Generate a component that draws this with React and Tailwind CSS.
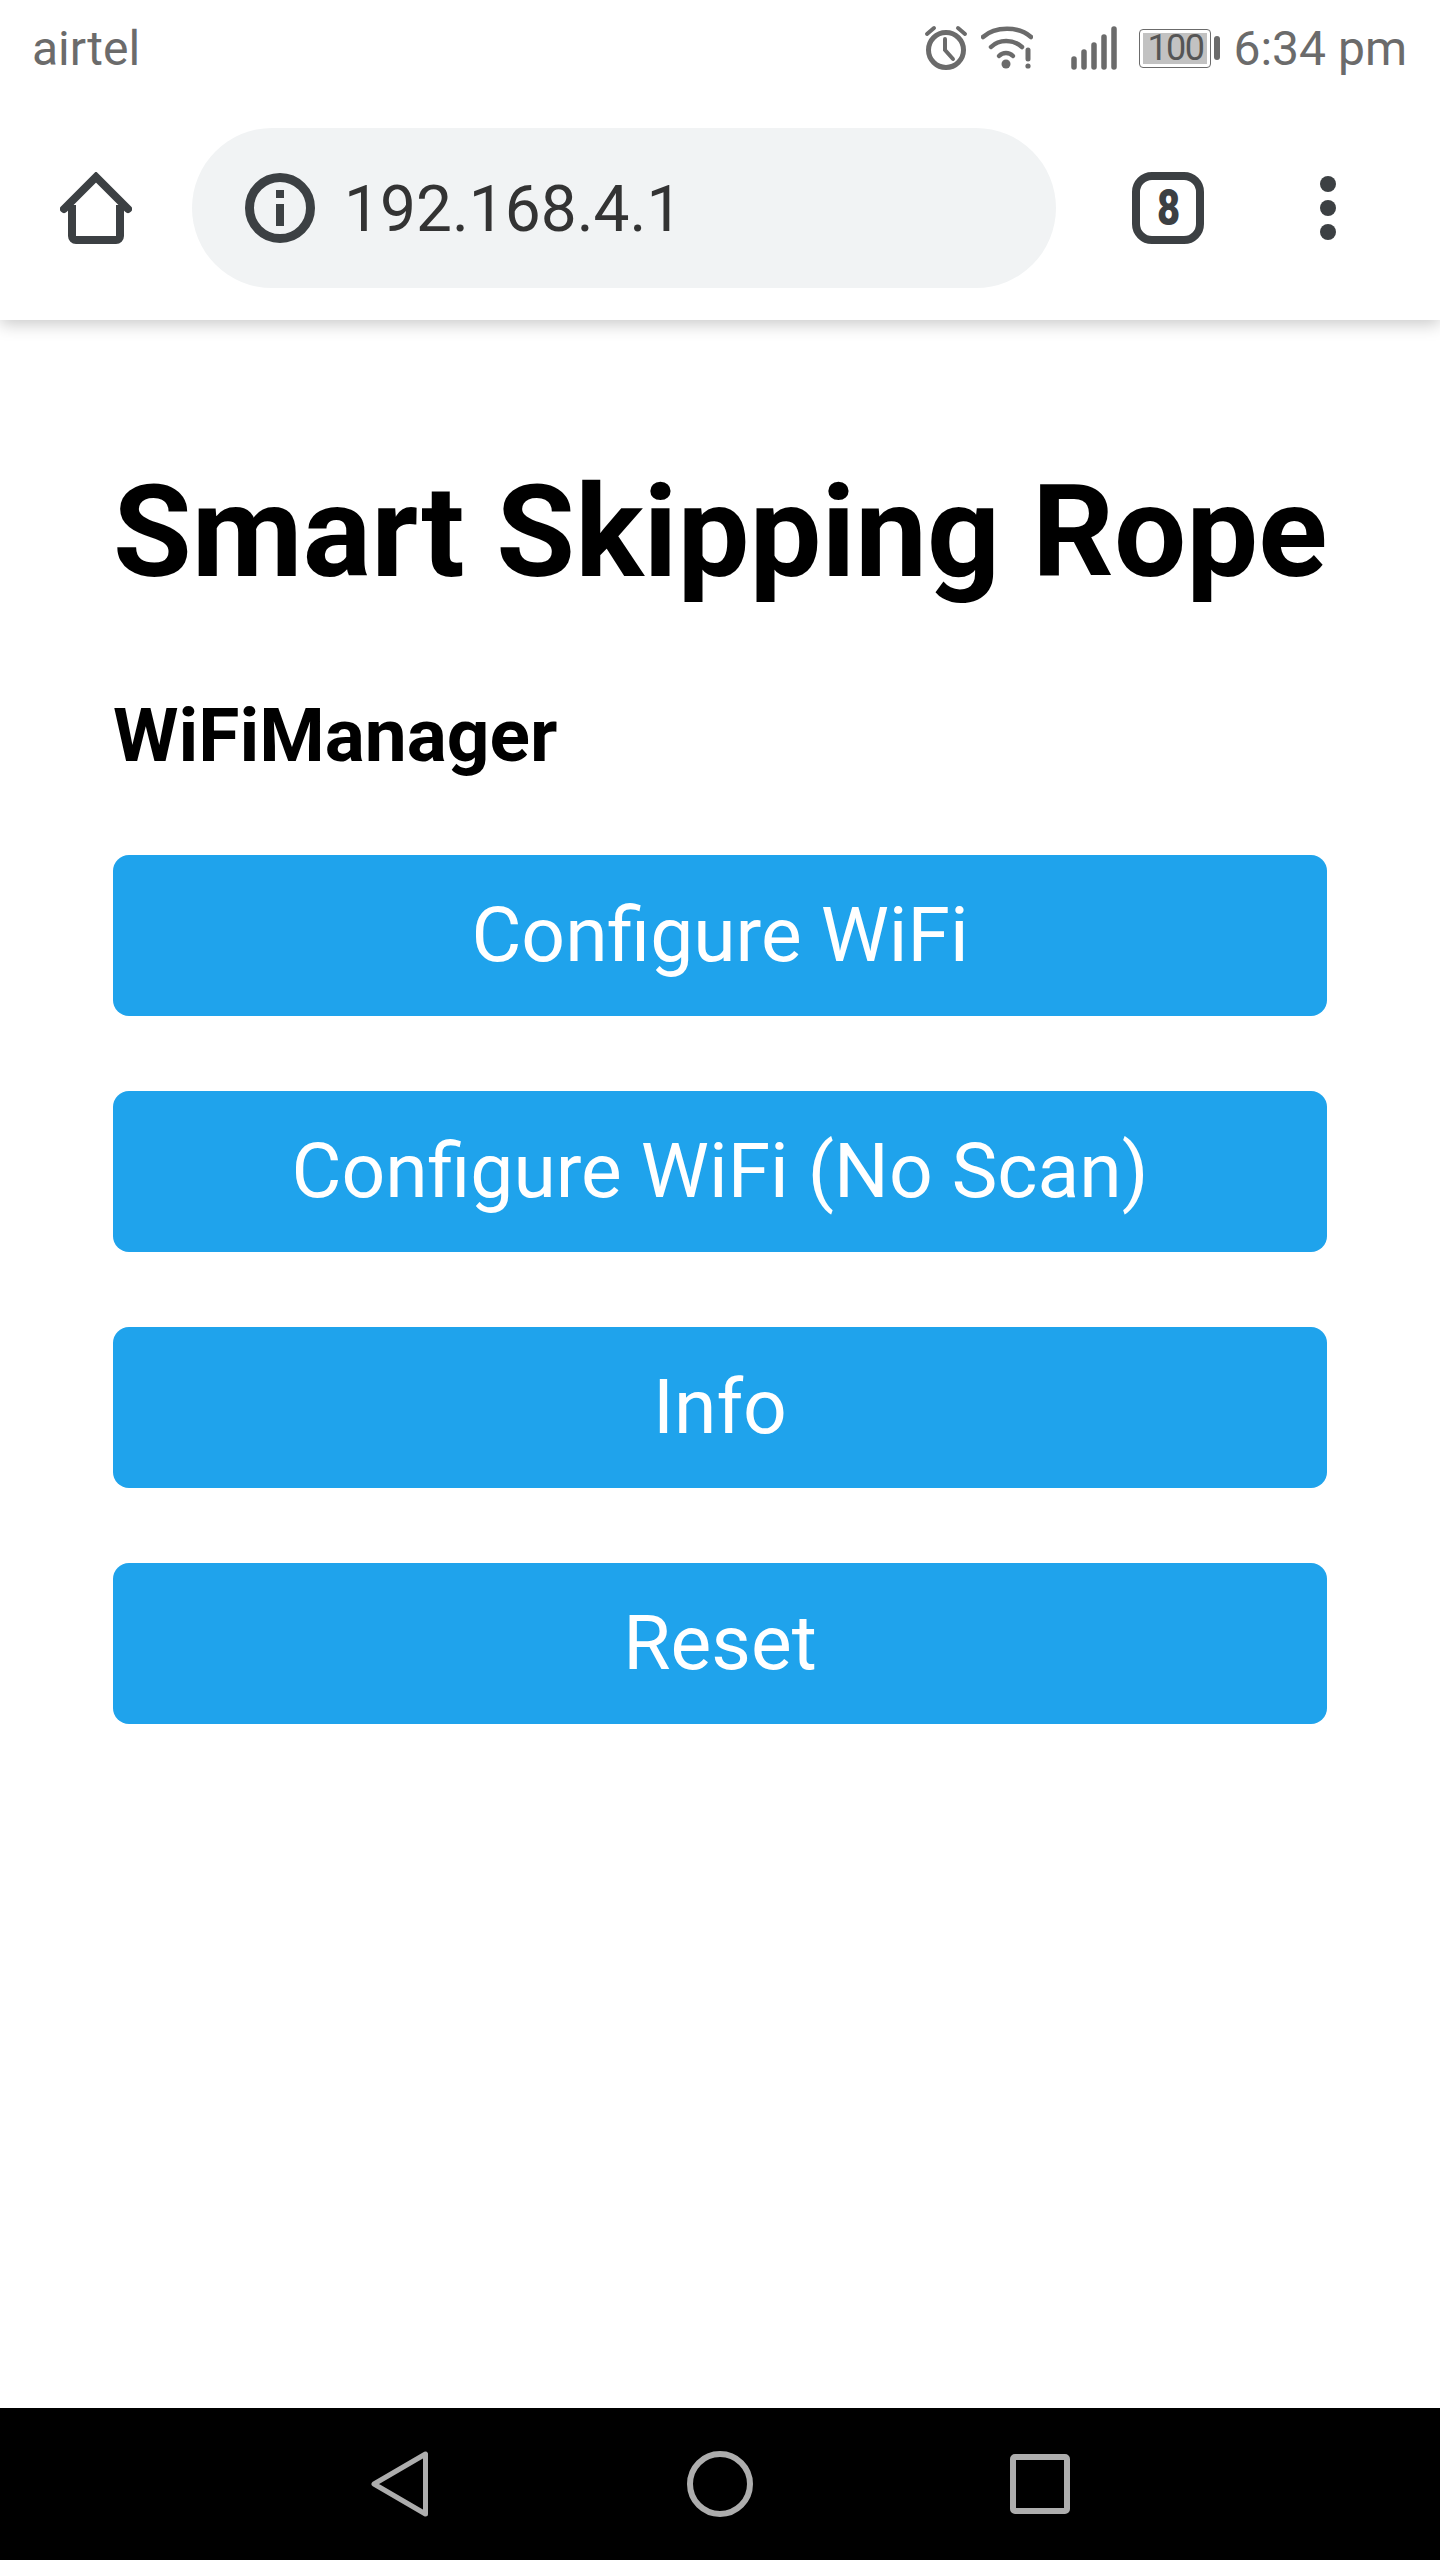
export default function App() {
  const buttons = ["Configure WiFi", "Configure WiFi (No Scan)", "Info", "Reset"];
  return (
    <div className="flex h-[2560px] w-[1440px] flex-col overflow-hidden bg-white font-['Roboto',sans-serif]">
      <header className="relative z-10 h-[320px] shrink-0 bg-white shadow-[0_4px_16px_rgba(0,0,0,0.22)]">
        <div className="flex h-[96px] items-center pl-[32px] pr-[33px] text-[#6b6b6b]">
          <span className="pt-[2px] text-[48px] leading-none">airtel</span>
          <div className="ml-auto flex items-center">
            <svg width="44" height="46" viewBox="0 0 44 46" fill="none" stroke="#6b6b6b" strokeLinecap="round" className="mr-[13px]">
              <circle cx="22" cy="25" r="17.5" strokeWidth="5" />
              <path d="M21 14v11l8 9" strokeWidth="4" />
              <path d="M3 9l7-6M41 9l-7-6" strokeWidth="4" />
            </svg>
            <svg width="52" height="44" viewBox="0 0 52 44" fill="none" stroke="#6b6b6b" strokeLinecap="round" className="mr-[38px]">
              <path d="M2 11C14 0 38 0 50 11" strokeWidth="4.5" />
              <path d="M10 21C18 13 32 13 41 21" strokeWidth="4.5" />
              <path d="M18 30C22 26 28 26 32 30" strokeWidth="4.5" />
              <circle cx="25" cy="38" r="4.5" fill="#6b6b6b" stroke="none" />
              <path d="M47 24v9" strokeWidth="5" />
              <circle cx="47" cy="40" r="2.6" fill="#6b6b6b" stroke="none" />
            </svg>
            <svg width="46" height="44" viewBox="0 0 46 44" fill="none" stroke="#6b6b6b" strokeWidth="5.5" strokeLinecap="round" className="mr-[22px]">
              <path d="M3 33v8M13 26v15M23 19v22M33 11v30M43 3v38" />
            </svg>
            <div className="mr-[3px] flex h-[39px] w-[72px] items-center justify-center rounded-[4px] border-[1.5px] border-[#6b6b6b] p-[3px]">
              <div className="flex h-full w-full items-center justify-center bg-[#c2c2c2] text-[36px] leading-none tracking-[-1.5px] text-[#555555]">100</div>
            </div>
            <div className="mr-[13px] h-[24px] w-[6px] rounded-full bg-[#6b6b6b]" />
            <span className="pt-[2px] text-[48px] leading-none">6:34 pm</span>
          </div>
        </div>
        <div className="flex h-[224px] items-center">
          <svg width="72" height="72" viewBox="0 0 72 72" fill="none" stroke="#3c4043" className="ml-[60px] mr-[60px] shrink-0">
            <path d="M4 37L36 5L68 37" strokeWidth="8" strokeLinecap="round" strokeLinejoin="miter" />
            <path d="M12 33V64a4 4 0 0 0 4 4H56a4 4 0 0 0 4-4V33" strokeWidth="8" />
          </svg>
          <div className="flex h-[160px] w-[864px] shrink-0 items-center rounded-full bg-[#f1f3f4] pl-[53px]">
            <svg width="70" height="70" viewBox="0 0 70 70" fill="none" className="shrink-0">
              <circle cx="35" cy="35" r="30.5" stroke="#3c4043" strokeWidth="9" />
              <rect x="31" y="17" width="8" height="8" fill="#3c4043" />
              <rect x="31" y="31" width="8" height="22" fill="#3c4043" />
            </svg>
            <span className="ml-[29px] pt-[3px] text-[64px] leading-none text-[#333333]">192.168.4.1</span>
          </div>
          <div className="ml-[76px] flex h-[72px] w-[72px] shrink-0 items-center justify-center rounded-[20px] border-[8px] border-[#3c4043] text-[50px] font-black leading-none text-[#3c4043]">
            <span className="scale-x-[0.8]">8</span>
          </div>
          <div className="ml-[116px] flex shrink-0 flex-col gap-[8px]">
            <div className="h-[16px] w-[16px] rounded-full bg-[#3c4043]" />
            <div className="h-[16px] w-[16px] rounded-full bg-[#3c4043]" />
            <div className="h-[16px] w-[16px] rounded-full bg-[#3c4043]" />
          </div>
        </div>
      </header>
      <main className="flex-1 px-[113px] pt-[137px] text-black">
        <h1 className="text-[128px] font-bold leading-[150px] whitespace-nowrap">Smart Skipping Rope</h1>
        <h3 className="mt-[85px] text-[74.88px] font-bold leading-[88px]">WiFiManager</h3>
        <div className="mt-[75px] flex flex-col gap-[75px]">
          {buttons.map((b) => (
            <div key={b} className="flex h-[161px] items-center justify-center rounded-[16px] bg-[#1fa3ec] text-[76.8px] leading-none text-white">{b}</div>
          ))}
        </div>
      </main>
      <footer className="flex h-[152px] shrink-0 items-center bg-black pl-[371px]">
        <svg width="58" height="66" viewBox="0 0 58 66" fill="none" stroke="#adadad" strokeWidth="5" strokeLinejoin="round">
          <path d="M3 33L54.5 3V63Z" />
        </svg>
        <svg width="66" height="66" viewBox="0 0 66 66" fill="none" stroke="#adadad" strokeWidth="6" className="ml-[258px]">
          <circle cx="33" cy="33" r="30" />
        </svg>
        <svg width="60" height="60" viewBox="0 0 60 60" fill="none" stroke="#adadad" strokeWidth="6" strokeLinejoin="round" className="ml-[257px]">
          <rect x="3" y="3" width="54" height="54" rx="2" />
        </svg>
      </footer>
    </div>
  );
}
